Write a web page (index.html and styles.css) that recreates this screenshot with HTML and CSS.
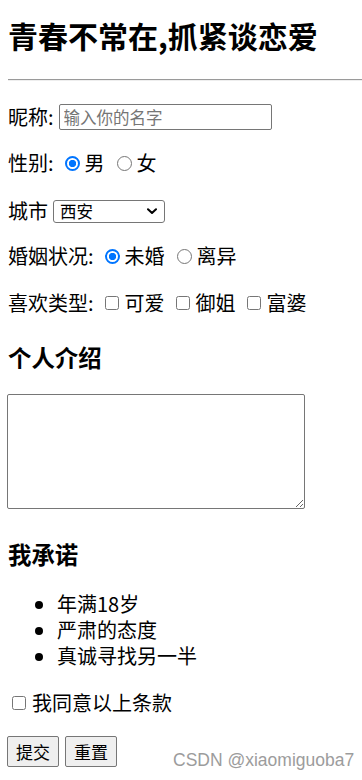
FILE: index.html
```html
<!DOCTYPE html>
<html lang="zh-CN">
<head>
<meta charset="utf-8">
<title>青春不常在,抓紧谈恋爱</title>
<link rel="stylesheet" href="styles.css">
</head>
<body>
<h2 class="title">青春不常在,抓紧谈恋爱</h2>
<hr class="rule">
<form class="form">
  <div class="row row-name">
    <span class="lbl">昵称:</span>
    <input class="text-input" type="text" placeholder="输入你的名字">
  </div>
  <div class="row row-sex">
    <span class="lbl">性别:</span>
    <label class="opt"><input class="radio" type="radio" name="sex" checked>男</label>
    <label class="opt"><input class="radio" type="radio" name="sex">女</label>
  </div>
  <div class="row row-city">
    <span class="lbl">城市</span>
    <span class="select-wrap">
      <select class="city">
        <option>西安</option>
        <option>北京</option>
        <option>上海</option>
      </select>
      <svg class="chev" width="10" height="7" viewBox="0 0 10 7" aria-hidden="true"><path d="M1 1.2 L5 5 L9 1.2" fill="none" stroke="#000" stroke-width="2" stroke-linecap="round" stroke-linejoin="round"/></svg>
    </span>
  </div>
  <div class="row row-marry">
    <span class="lbl">婚姻状况:</span>
    <label class="opt"><input class="radio" type="radio" name="marry" checked>未婚</label>
    <label class="opt"><input class="radio" type="radio" name="marry">离异</label>
  </div>
  <div class="row row-like">
    <span class="lbl">喜欢类型:</span>
    <label class="opt"><input class="check" type="checkbox">可爱</label>
    <label class="opt"><input class="check" type="checkbox">御姐</label>
    <label class="opt"><input class="check" type="checkbox">富婆</label>
  </div>
  <h3 class="sub sub-intro">个人介绍</h3>
  <textarea class="intro"></textarea>
  <h3 class="sub sub-promise">我承诺</h3>
  <ul class="promise">
    <li>年满18岁</li>
    <li>严肃的态度</li>
    <li>真诚寻找另一半</li>
  </ul>
  <div class="row row-agree">
    <label class="agree"><input class="check" type="checkbox">我同意以上条款</label>
  </div>
  <div class="actions">
    <button class="btn" type="submit">提交</button>
    <button class="btn" type="reset">重置</button>
  </div>
</form>
<div class="watermark">CSDN @xiaomiguoba7</div>
</body>
</html>
```
FILE: styles.css
```css
html, body {
  margin: 0;
  padding: 0;
  background: #ffffff;
}
body {
  padding-left: 8px;
  font-family: "Noto Sans CJK SC", "Noto Sans", sans-serif;
  font-size: 20px;
  line-height: 26px;
  color: #000000;
  position: relative;
  min-height: 780px;
  box-sizing: border-box;
}
.title {
  margin: 17px 0 0;
  font-size: 30px;
  line-height: 36px;
  font-weight: bold;
}
.rule {
  margin: 26px 0 0;
  height: 0;
  border: 0;
  border-top: 1px solid #9a9a9a;
  border-bottom: 1px solid #eeeeee;
}
.form {
  margin: 0;
}
.row {
  display: flex;
  align-items: center;
  height: 26px;
  white-space: nowrap;
}
.row-name { margin-top: 23px; }
.row-sex { margin-top: 20px; }
.row-city { margin-top: 22px; }
.row-marry { margin-top: 19px; }
.row-like { margin-top: 21px; }
.row-agree { margin-top: 21px; }

.opt {
  display: flex;
  align-items: center;
  margin-left: 11px;
}
.opt + .opt {
  margin-left: 12px;
}
.row-like .opt + .opt {
  margin-left: 11px;
}
.radio {
  -webkit-appearance: none;
  appearance: none;
  width: 15px;
  height: 15px;
  margin: 0 5px 0 0;
  box-sizing: border-box;
  border: 1px solid #767676;
  border-radius: 50%;
  background: #ffffff;
  flex: none;
}
.radio:checked {
  border: 2px solid #0075ff;
  background: radial-gradient(circle, #0075ff 0 3.4px, #ffffff 3.9px);
}
.check {
  -webkit-appearance: none;
  appearance: none;
  width: 14px;
  height: 14px;
  margin: 0 6px 0 0;
  box-sizing: border-box;
  border: 1px solid #767676;
  border-radius: 2.5px;
  background: #ffffff;
  flex: none;
}
.text-input {
  margin-left: 5px;
  width: 213px;
  height: 26px;
  box-sizing: border-box;
  padding: 0 4px;
  border: 1px solid #767676;
  border-radius: 2px;
  font-family: "Noto Sans CJK SC", sans-serif;
  font-size: 16.5px;
}
.text-input::placeholder {
  color: #757575;
}
.select-wrap {
  position: relative;
  display: block;
  margin-left: 5px;
  width: 112px;
  height: 23px;
}
.city {
  -webkit-appearance: none;
  appearance: none;
  display: block;
  width: 112px;
  height: 23px;
  box-sizing: border-box;
  padding: 0 20px 0 6px;
  border: 1px solid #767676;
  border-radius: 3px;
  background: #ffffff;
  color: #000000;
  font-family: "Noto Sans CJK SC", sans-serif;
  font-size: 16.5px;
  line-height: 21px;
}
.chev {
  position: absolute;
  right: 8px;
  top: 8px;
  pointer-events: none;
}
.sub {
  margin: 0;
  font-size: 23.4px;
  line-height: 30px;
  font-weight: bold;
}
.sub-intro { margin-top: 26px; }
.sub-promise { margin-top: 30px; }
.intro {
  display: block;
  margin: 22px 0 0 -1px;
  width: 298px;
  height: 115px;
  box-sizing: border-box;
  border: 1px solid #767676;
  border-radius: 2px;
  font-family: "Noto Sans CJK SC", sans-serif;
  font-size: 16.5px;
}
.promise {
  margin: 22px 0 0;
  padding-left: 49px;
  list-style: disc;
}
.promise li {
  line-height: 26px;
}
.agree {
  display: flex;
  align-items: center;
  margin-left: 4px;
}
.agree .check {
  margin-right: 6px;
}
.actions {
  display: flex;
  gap: 6px;
  margin: 20px 0 0 -1px;
}
.btn {
  height: 31px;
  padding: 0 8px;
  box-sizing: border-box;
  background: #efefef;
  border: 1px solid #767676;
  border-radius: 2px;
  font-family: "Noto Sans CJK SC", sans-serif;
  font-size: 17px;
  color: #000000;
}
.watermark {
  position: absolute;
  left: 173px;
  top: 750px;
  font-family: "Liberation Sans", Arial, sans-serif;
  font-size: 17.5px;
  line-height: 20px;
  color: #9c9c9c;
  text-shadow: 0 0 2px #ffffff;
  white-space: nowrap;
}
```
